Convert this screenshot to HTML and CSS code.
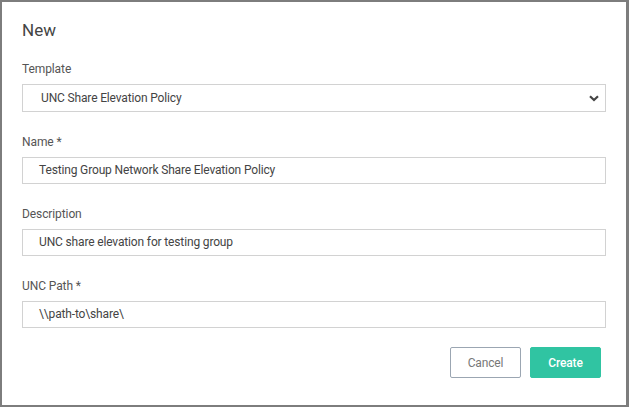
FILE: index.html
```html
<!DOCTYPE html>
<html>
<head>
<meta charset="utf-8">
<link rel="stylesheet" href="styles.css">
</head>
<body>
<div class="dialog">
  <h1 class="title">New</h1>
  <div class="field">
    <label class="label">Template</label>
    <div class="select">
      <span class="value">UNC Share Elevation Policy</span>
      <svg class="chev" width="10" height="7" viewBox="0 0 10 7"><path d="M1 1.2 L5 5 L9 1.2" fill="none" stroke="#444" stroke-width="2.2"/></svg>
    </div>
  </div>
  <div class="field">
    <label class="label">Name *</label>
    <div class="input">Testing Group Network Share Elevation Policy</div>
  </div>
  <div class="field">
    <label class="label">Description</label>
    <div class="input">UNC share elevation for testing group</div>
  </div>
  <div class="field">
    <label class="label">UNC Path *</label>
    <div class="input">\\path-to\share\</div>
  </div>
  <div class="actions">
    <button class="btn cancel">Cancel</button>
    <button class="btn create">Create</button>
  </div>
</div>
</body>
</html>
```
FILE: styles.css
```css
html, body { margin: 0; padding: 0; background: #fff; }
body { font-family: Roboto, "Liberation Sans", sans-serif; color: #555; }
.dialog {
  box-sizing: border-box;
  width: 629px;
  height: 407px;
  border-style: solid;
  border-color: #7d7d7d;
  border-width: 2px 3px 2px 2px;
  padding: 18px 20px 0 20px;
  display: flex;
  flex-direction: column;
}
.title {
  margin: 0 0 21px 0;
  font-size: 17px;
  line-height: 20px;
  font-weight: 400;
  color: #444;
}
.field { display: flex; flex-direction: column; margin-bottom: 22px; }
.label { font-size: 12px; line-height: 16px; color: #555; margin-bottom: 7px; letter-spacing: -0.1px; }
.input, .select {
  box-sizing: border-box;
  height: 27px;
  border: 1px solid #d2d2d2;
  font-size: 12px;
  letter-spacing: -0.15px;
  line-height: 25px;
  padding-left: 16px;
  color: #444;
}
.select {
  height: 28px;
  line-height: 26px;
  padding-left: 18px;
  padding-right: 6px;
  display: flex;
  align-items: center;
  justify-content: space-between;
}
.chev { margin-top: 1px; }
.actions {
  margin-top: -3px;
  display: flex;
  justify-content: flex-end;
  gap: 9px;
  padding-right: 5px;
}
.btn {
  box-sizing: border-box;
  width: 71px;
  height: 31px;
  border-radius: 2px;
  font-family: Roboto, "Liberation Sans", sans-serif;
  font-size: 12px;
  letter-spacing: -0.15px;
  cursor: pointer;
}
.cancel { background: #fff; border: 1px solid #9ba6b2; color: #777; }
.create { background: #30c4a2; border: 1px solid #30c4a2; color: #fff; font-weight: 500; }
```
